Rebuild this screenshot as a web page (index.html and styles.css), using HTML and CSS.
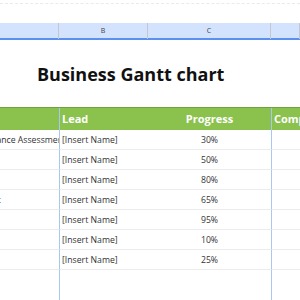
FILE: index.html
```html
<!DOCTYPE html>
<html lang="en">
<head>
  <meta charset="UTF-8" />
  <title>Business Gantt chart</title>
  <link rel="stylesheet" href="styles.css">
</head>
<body>
  <div class="sheet">
    <div class="toolbar"></div>
    <div class="col-heads">
      <div class="col-head"></div>
      <div class="col-head">B</div>
      <div class="col-head">C</div>
      <div class="col-head"></div>
    </div>

    <div class="title-row">
      <h1>Business Gantt chart</h1>
    </div>

    <div class="grid">
      <div class="hd"></div>
      <div class="hd lead">Lead</div>
      <div class="hd center">Progress</div>
      <div class="hd comp">Comp</div>

      <div class="cell task"><span>Performance Assessment</span></div>
      <div class="cell lead">[Insert Name]</div>
      <div class="cell center">30%</div>
      <div class="cell comp"></div>

      <div class="cell task"></div>
      <div class="cell lead">[Insert Name]</div>
      <div class="cell center">50%</div>
      <div class="cell comp"></div>

      <div class="cell task"></div>
      <div class="cell lead">[Insert Name]</div>
      <div class="cell center">80%</div>
      <div class="cell comp"></div>

      <div class="cell task"><span class="short">Budget</span></div>
      <div class="cell lead">[Insert Name]</div>
      <div class="cell center">65%</div>
      <div class="cell comp"></div>

      <div class="cell task"></div>
      <div class="cell lead">[Insert Name]</div>
      <div class="cell center">95%</div>
      <div class="cell comp"></div>

      <div class="cell task"></div>
      <div class="cell lead">[Insert Name]</div>
      <div class="cell center">10%</div>
      <div class="cell comp"></div>

      <div class="cell task"></div>
      <div class="cell lead">[Insert Name]</div>
      <div class="cell center">25%</div>
      <div class="cell comp"></div>

      <div class="cell task last"></div>
      <div class="cell lead last"></div>
      <div class="cell center last"></div>
      <div class="cell comp last"></div>
    </div>
  </div>
</body>
</html>
```

FILE: styles.css
```css
body {
  margin: 0;
  font-family: "Open Sans", "Liberation Sans", sans-serif;
  background-color: #fff;
  overflow: hidden;
}
.sheet {
  width: 300px;
  height: 300px;
  overflow: hidden;
}
.toolbar {
  margin-top: 3px;
  height: 19px;
  border-top: 1px dashed #eaeaea;
}
.col-heads {
  display: grid;
  grid-template-columns: 59px 89px 123px 1fr;
  height: 15px;
  background-color: #d3e3fd;
  border-bottom: 2px solid #5b8ff0;
}
.col-head {
  border-right: 1px solid #c4c7cc;
  font-size: 7px;
  color: #444;
  text-align: center;
  line-height: 16px;
}
.title-row {
  height: 67px;
  display: flex;
  align-items: center;
  padding-left: 37px;
}
h1 {
  margin: 0;
  font-size: 18px;
  font-weight: bold;
  color: #111;
}
.grid {
  display: grid;
  grid-template-columns: 59px 89px 123px 1fr;
  border-top: 1px solid #6fa23a;
}
.hd {
  height: 22px;
  background-color: #8bc14d;
  color: #fff;
  font-weight: bold;
  font-size: 11px;
  line-height: 21px;
}
.cell {
  height: 20px;
  border-bottom: 1px solid #ececec;
  box-sizing: border-box;
  font-size: 8.7px;
  line-height: 21px;
  color: #333;
  white-space: nowrap;
  overflow: hidden;
}
.lead {
  border-left: 1px solid #a9c8ec;
  padding-left: 2px;
}
.center {
  text-align: center;
}
.comp {
  border-left: 1px solid #a9c8ec;
  padding-left: 2px;
}
.task span {
  display: inline-block;
  margin-left: -37px;
}
.task .short {
  margin-left: -28px;
}
.last {
  height: 40px;
  border-bottom: none;
}
```
